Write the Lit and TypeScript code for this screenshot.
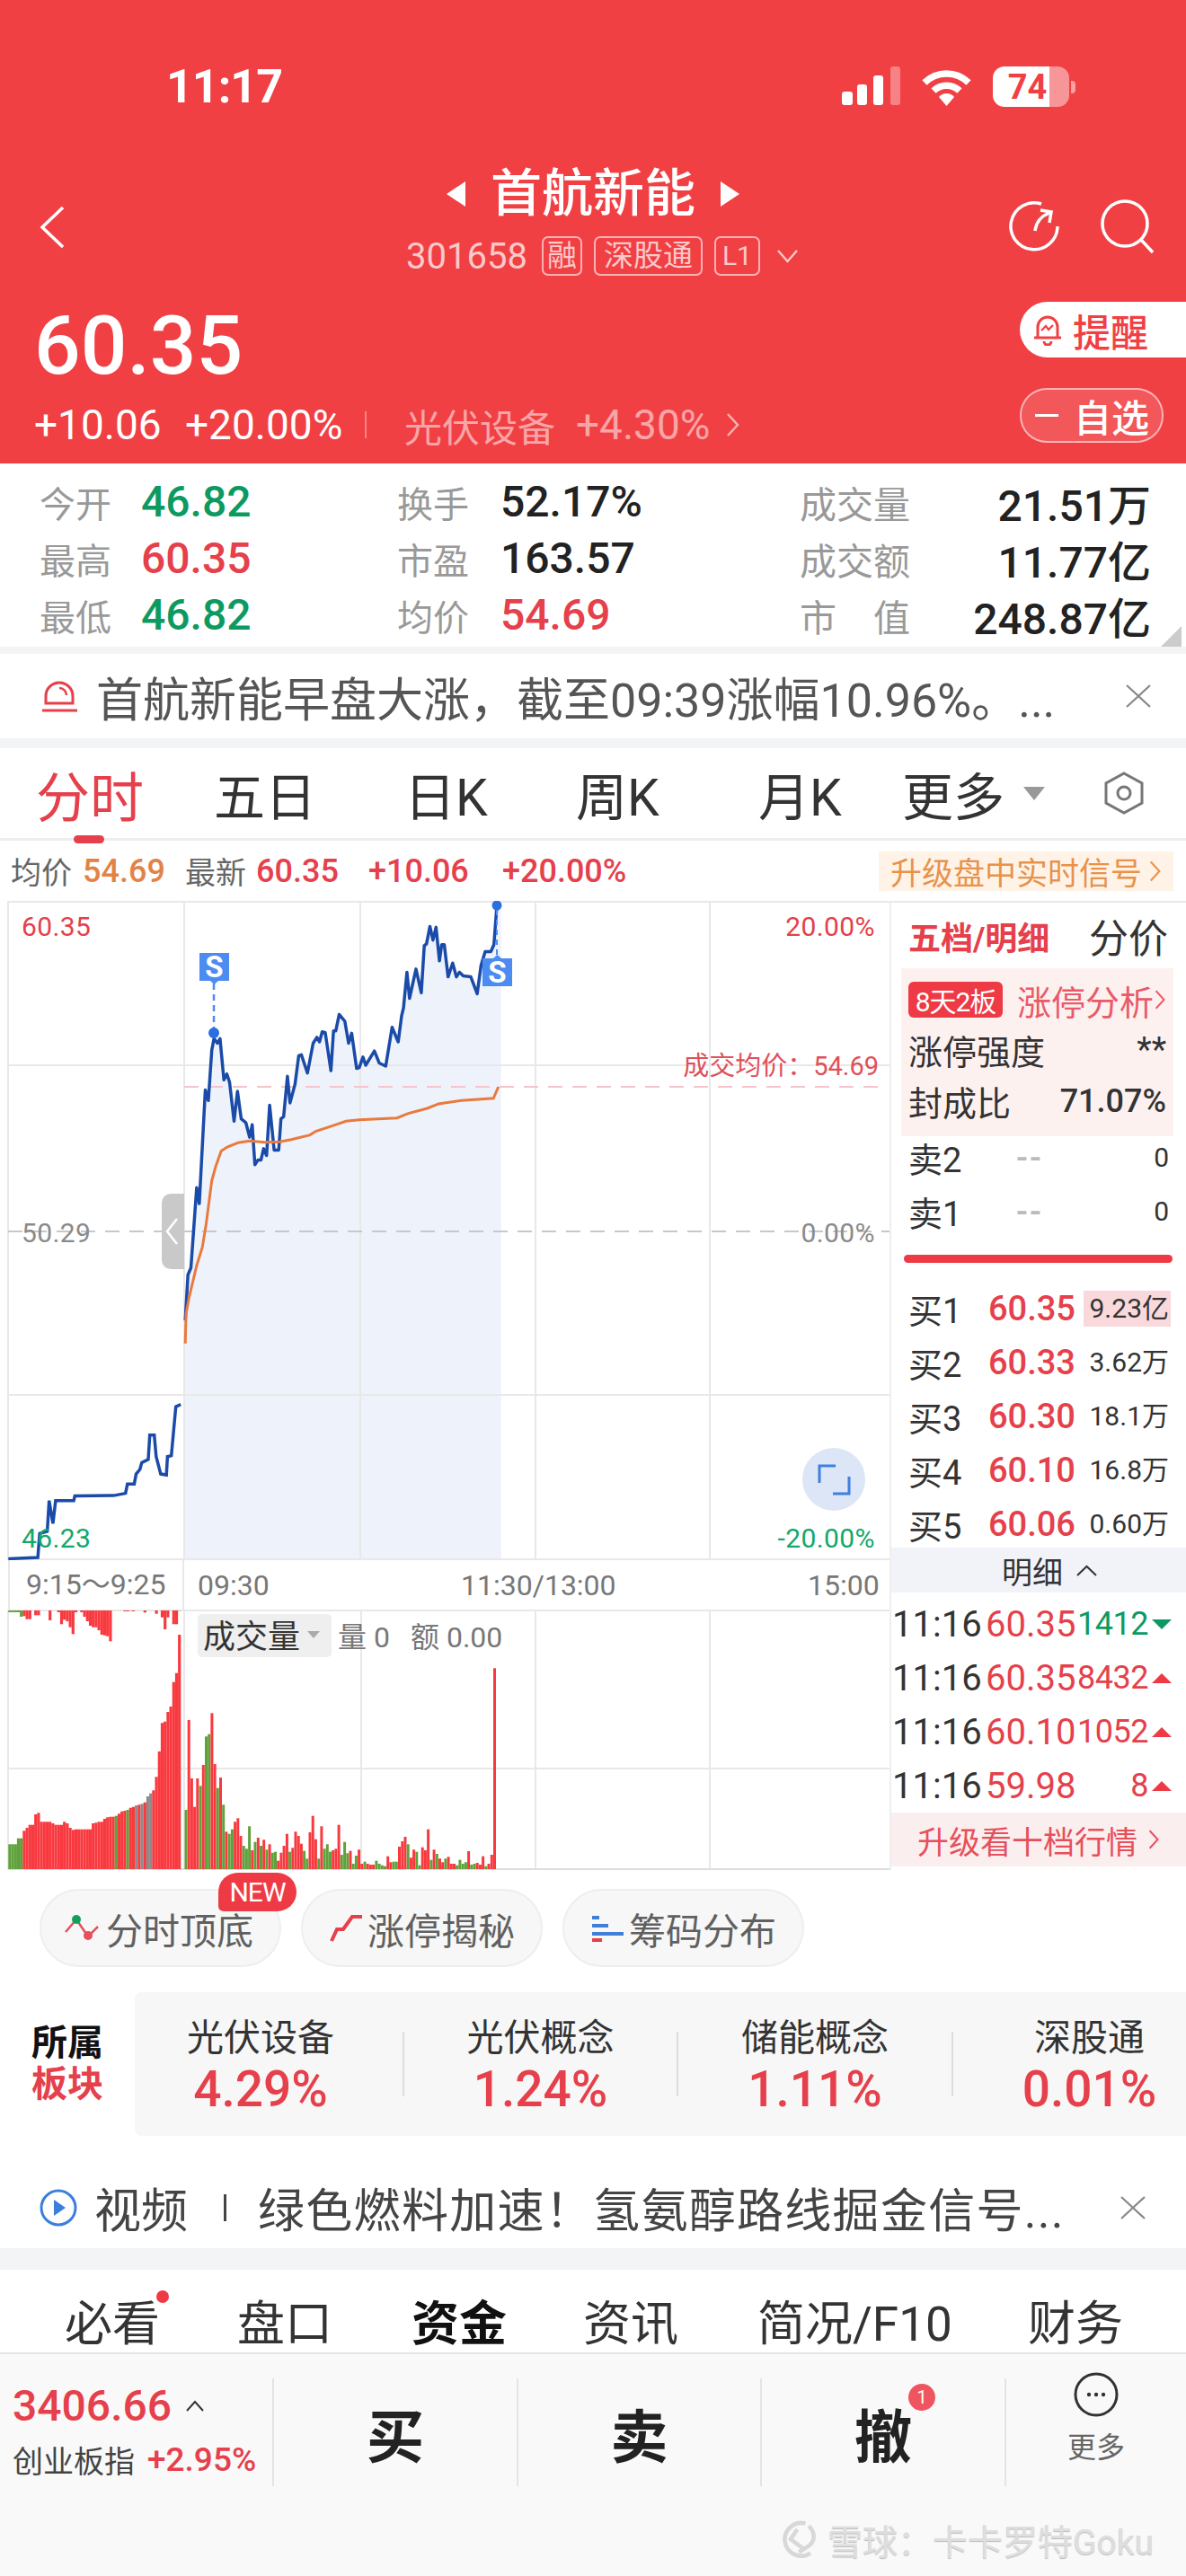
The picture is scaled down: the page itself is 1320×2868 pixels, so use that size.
import { LitElement, html, svg, css } from "lit"
import { customElement } from "lit/decorators.js"

// all chart data is read off the screenshot, in zoomed crop coordinates
const mainLine = [[490,1000],[497,900],[505,885],[520,710],[527,745],[543,497],[551,520],[560,410],[566,385],[575,395],[582,385],[592,475],[600,462],[607,480],[619,565],[628,500],[638,560],[650,568],[660,600],[667,573],[674,660],[682,650],[690,650],[697,625],[705,640],[713,530],[725,628],[737,628],[743,560],[750,555],[760,467],[767,525],[780,485],[790,422],[797,420],[813,460],[828,395],[838,382],[845,392],[852,370],[860,372],[875,455],[882,368],[888,368],[897,332],[912,347],[922,395],[930,373],[943,450],[950,448],[960,425],[967,443],[990,412],[1003,438],[1020,445],[1037,360],[1053,392],[1062,335],[1067,318],[1076,240],[1083,297],[1100,233],[1114,285],[1122,182],[1128,178],[1137,140],[1145,170],[1153,142],[1162,215],[1168,180],[1175,180],[1185,250],[1197,220],[1207,250],[1215,240],[1225,248],[1245,250],[1262,287],[1272,225],[1283,195],[1298,195],[1306,180],[1314,95]]
const avgLine = [[490,1050],[492,985],[500,950],[520,880],[535,840],[545,790],[560,695],[570,665],[585,630],[600,622],[630,612],[660,608],[700,611],[740,610],[770,605],[820,595],[835,587],[890,572],[915,565],[950,562],[1050,558],[1080,548],[1130,537],[1160,527],[1220,520],[1305,515],[1318,490]]
const preLine = [[22,1520],[100,1517],[105,1465],[125,1460],[130,1393],[140,1443],[147,1393],[195,1393],[198,1383],[300,1382],[332,1377],[337,1357],[355,1357],[360,1335],[370,1325],[375,1310],[392,1303],[396,1250],[408,1250],[413,1297],[425,1335],[440,1337],[443,1297],[453,1295],[465,1188],[478,1183]]

const preBars = "g820 g820 g820 g800 g800 r775 r765 r755 r755 r720 r715 r745 r745 r745 r745 r750 r755 r755 r755 r745 r750 r765 r772 r770 r770 r770 r770 r770 r770 r750 r748 r745 r745 r735 r730 r728 r728 g725 r718 r710 r708 g705 r698 r695 k690 r688 k685 r680 k660 k650 r640 r595 r510 r415 r410 r378 r360 r278 r248 r120".split(" ")
const auctionBars: [number, string, number][] = [[0,"g",45],[1,"g",45],[2,"g",45],[3,"g",45],[4,"g",60],[5,"r",58],[6,"r",68],[7,"r",68],[9,"r",55],[10,"r",55],[14,"r",72],[17,"r",45],[18,"r",85],[19,"r",70],[20,"r",75],[21,"r",95],[22,"r",118],[23,"r",45],[25,"r",45],[26,"r",60],[27,"r",75],[28,"r",90],[29,"r",95],[30,"r",95],[31,"r",105],[32,"r",120],[33,"r",122],[34,"r",125],[35,"r",142],[40,"r",42],[41,"r",42],[42,"r",40],[43,"r",42],[47,"r",46],[51,"r",50],[53,"r",62],[54,"r",102],[55,"r",62],[57,"r",85],[58,"r",85],[59,"r",40]]
const dayBars = "g705 r405 r600 r695 r600 g625 r555 g460 g452 r382 r552 g632 r597 g688 r778 g785 g770 r745 r733 r792 g825 g835 g760 r840 g812 r798 g825 r805 g838 r820 g848 g845 r875 r848 r825 r785 g845 r832 r778 r792 r818 g842 g868 r780 r725 r803 g868 r760 g835 g820 g845 r840 r835 r755 g855 g812 g850 r842 g885 g858 r838 r885 g878 r885 r888 r888 g875 g885 g890 g893 r860 r880 g878 g878 r828 r810 r795 g820 r865 r838 g845 g890 r830 r840 r770 g872 r838 g852 r868 r880 g868 r862 r885 r885 g890 g872 g885 g880 r843 g888 g885 r882 r888 r860 g893 r885 r855 r232".split(" ")

const barColor: Record<string, string> = { r: "#f8393f", g: "#5fa13b", k: "#8f8a8a" }

const toPoints = (pts: number[][]) =>
	pts.map(([x, y]) => `${(x / 2.376).toFixed(1)},${(y / 1.96 - 43).toFixed(1)}`).join(" ")

const chevronRight = (cls = "chev") => html`<svg class=${cls} viewBox="0 0 16 28"><path d="M2 2l11 12L2 26" fill="none" stroke="currentColor" stroke-width="2.4"/></svg>`

const buys = [
	["买1", "60.35", "9.23亿"],
	["买2", "60.33", "3.62万"],
	["买3", "60.30", "18.1万"],
	["买4", "60.10", "16.8万"],
	["买5", "60.06", "0.60万"],
]
const trades = [
	["60.35", "1412", "down"],
	["60.35", "8432", "up"],
	["60.10", "1052", "up"],
	["59.98", "8", "up"],
]
const sectors = [
	["光伏设备", "4.29%"],
	["光伏概念", "1.24%"],
	["储能概念", "1.11%"],
	["深股通", "0.01%"],
]

@customElement("app-root")
export class AppRoot extends LitElement {
	static styles = css`
:host {
	display: block;
	width: 1320px;
	height: 2868px;
	overflow: hidden;
	background: #fff;
	font-family: Roboto, "Noto Sans CJK SC", sans-serif;
	color: #333;
}
svg { display: block; }
.chev { width: 16px; height: 28px; }

/* red header */
.header { height: 516px; background: #f14044; color: #fff; }
.status { height: 130px; display: flex; align-items: flex-start; padding: 74px 123px 0 185px; box-sizing: border-box; }
.time { font-size: 52px; font-weight: 700; line-height: 46px; letter-spacing: -1px; }
.status-icons { margin-left: auto; display: flex; align-items: flex-start; }
.wifi { margin: 1px 23px 0 23px; }
.battery {
	width: 85px; height: 45px; border-radius: 13px; display: flex; align-items: center; justify-content: center;
	background: linear-gradient(90deg, #fff 74%, rgba(255,255,255,.45) 74%);
	color: #f14044; font-size: 38px; font-weight: 700; padding-right: 8px; box-sizing: border-box;
}
.nib { width: 5px; height: 14px; margin: 16px 0 0 2px; background: rgba(255,255,255,.5); border-radius: 0 4px 4px 0; }

.nav { height: 206px; display: grid; grid-template-columns: 1fr auto 1fr; padding-top: 56px; box-sizing: border-box; }
.back { margin: 42px 0 0 42px; }
.mid { display: flex; flex-direction: column; align-items: center; }
.title-row { display: flex; align-items: center; gap: 28px; height: 60px; }
.title { font-size: 57px; font-weight: 500; line-height: 60px; }
.code-row { display: flex; align-items: center; margin-top: 17px; height: 44px; color: rgba(255,255,255,.72); padding-left: 20px; }
.code { font-size: 40px; margin-right: 16px; }
.tag { height: 44px; box-sizing: border-box; border: 2px solid rgba(255,255,255,.6); border-radius: 7px; font-size: 33px; line-height: 40px; padding: 0 4px; margin-right: 13px; }
.tag.wide { padding: 0 9px; }
.tag.l1 { font-size: 30px; padding: 0 7px; }
.code-row .down { margin-left: 6px; }
.actions { display: flex; justify-content: flex-end; align-items: flex-start; gap: 43px; padding: 36px 34px 0 0; }

.price-row { display: flex; justify-content: space-between; }
.price { font-size: 91px; font-weight: 500; line-height: 94px; padding: 2px 0 0 38px; margin-bottom: -2px; }
.change { display: grid; grid-template-columns: 168px 200px 44px 191px 167px auto; align-items: center; height: 86px; padding-left: 38px; font-size: 46px; }
.change .dim { color: rgba(255,255,255,.55); }
.change .sector { font-size: 42px; }
.change .bar { width: 2px; height: 30px; background: rgba(255,255,255,.35); }
.change .chev { color: rgba(255,255,255,.6); }
.remind {
	width: 185px; height: 62px; box-sizing: border-box; background: #fff; color: #f14044; border-radius: 31px 0 0 31px;
	display: flex; align-items: center; padding-left: 14px; gap: 11px; font-size: 42px; font-weight: 500;
}
.watch {
	width: 160px; height: 61px; box-sizing: border-box; margin: 34px 25px 0 0; border-radius: 30px; border: 2px solid rgba(255,255,255,.55);
	background: rgba(255,255,255,.12); display: flex; align-items: center; padding-left: 15px; gap: 17px; font-size: 42px; font-weight: 500;
}
.watch i { width: 26px; height: 3px; background: #fff; }

/* quote grid */
.stats {
	position: relative; height: 212px; box-sizing: border-box; padding: 11px 39px 0 44px;
	display: grid; grid-template-columns: 398px 448px 1fr; grid-auto-rows: 63px; border-bottom: 8px solid #f4f4f5;
}
.cell { display: flex; align-items: center; font-size: 48px; font-weight: 500; color: #222; }
.lab { font-size: 40px; font-weight: 400; color: #999; width: 113px; flex: none; }
.col2 .lab { width: 115px; }
.col3 .lab { width: 123px; font-size: 41px; display: flex; justify-content: space-between; }
.col3 b { margin-left: auto; font-weight: 500; }
.red { color: #e5404b; }
.green { color: #0d9a62; }
.cell.red { color: #e5404b; }
.cell.green { color: #0d9a62; }
.corner { position: absolute; right: 5px; bottom: 0; width: 0; height: 0; border-left: 23px solid transparent; border-bottom: 23px solid #ccc; }

.notice { display: flex; align-items: center; height: 94px; padding-left: 46px; font-size: 52px; color: #555; white-space: nowrap; }
.notice .icon { margin-right: 20px; flex: none; }
.notice .close { margin-left: auto; margin-right: 39px; flex: none; }
.band { background: #f3f4f6; }
.band.thin { height: 11px; }
.band.wide { height: 24px; }

/* period tabs */
.tabs {
	height: 103px; box-sizing: border-box; border-bottom: 3px solid #eee; padding-left: 40px; font-size: 57px; color: #333;
	display: grid; grid-template-columns: 198px 212px 191px 203px 160px 135px 90px auto; align-items: center;
}
.tabs .on { position: relative; color: #e5404b; font-size: 60px; }
.tabs .on::after { content: ""; position: absolute; left: 42px; bottom: -12px; width: 34px; height: 9px; border-radius: 5px; background: #e5404b; }
.tri { width: 0; height: 0; border-left: 12px solid transparent; border-right: 12px solid transparent; border-top: 15px solid #999; }

.info {
	height: 67px; padding-left: 12px; font-size: 34px; color: #666; align-items: center;
	display: grid; grid-template-columns: 80px 114px 79px 125px 149px 419px 328px;
}
.info b { font-size: 36px; font-weight: 500; white-space: nowrap; }
.orange { color: #e28345; }
.signal { height: 44px; background: #fff3e8; color: #e8924a; font-size: 35px; display: flex; align-items: center; justify-content: center; gap: 8px; }
.signal .chev { width: 14px; height: 26px; }

/* chart + depth */
.board { display: flex; height: 1079px; }
.left { width: 990px; flex: none; }
.axis { height: 55px; box-sizing: border-box; margin-left: 9px; border-left: 2px solid #e8e8e8; display: grid; grid-template-columns: 194px 308px 386px auto; align-items: center; font-size: 32px; color: #777; white-space: nowrap; }
.axis span:first-child { padding-left: 18px; border-right: 2px solid #e8e8e8; height: 55px; line-height: 55px; }
.axis span:nth-child(2) { padding-left: 15px; }
svg text { font-family: Roboto, "Noto Sans CJK SC", sans-serif; }
.t { font-size: 30px; letter-spacing: .4px; }
.tc { font-size: 29px; }
.tv { font-size: 32px; fill: #777; }
.ts { font-size: 33px; font-weight: 700; fill: #fff; }

.right { flex: 1; border-top: 2px solid #e8e8e8; border-left: 2px solid #eee; box-sizing: border-box; }
.right-head { height: 73px; display: flex; align-items: center; justify-content: space-between; padding: 0 20px 0 19px; }
.right-head b { font-size: 36px; color: #e5404b; }
.right-head span { font-size: 44px; color: #333; }
.limit { height: 187px; box-sizing: border-box; margin: 0 14px 0 11px; background: #fdf1f0; padding: 15px 8px 0 8px; font-size: 38px; }
.limit-top { display: flex; align-items: center; height: 40px; color: #ea5a68; white-space: nowrap; }
.board-badge { width: 105px; height: 40px; flex: none; border-radius: 6px; background: #ee3a45; color: #fff; font-size: 30px; display: flex; align-items: center; justify-content: center; margin-right: 16px; white-space: nowrap; letter-spacing: -1px; }
.limit-top .chev { margin-left: auto; width: 13px; height: 24px; flex: none; }
.limit-row { display: flex; justify-content: space-between; align-items: center; height: 57px; color: #333; white-space: nowrap; }
.limit-row b { font-weight: 500; font-size: 36px; }
.limit-top + .limit-row { margin-top: 7px; }
.quotes { padding: 0 17px 0 19px; display: grid; grid-auto-rows: 52px; row-gap: 8px; }
.quotes.sell { margin-top: -4px; }
.q { display: grid; grid-template-columns: 89px 106px 1fr; align-items: center; font-size: 38px; white-space: nowrap; }
.q .p { font-weight: 500; color: #e5404b; }
.q .v { font-size: 30px; text-align: right; color: #333; padding-right: 2px; line-height: 40px; }
.q .v.hl { background: #f9d9db; }
.q .dash { color: #bbb; padding-left: 31px; letter-spacing: 2px; font-weight: 500; }
.depth-bar { height: 9px; border-radius: 5px; background: #ee3a45; margin: 24px 15px 23px 14px; }
.detail-head { height: 50px; margin-top: 2px; padding-left: 24px; background: #f2f3f8; display: flex; align-items: center; justify-content: center; gap: 15px; font-size: 34px; color: #333; }
.trades { padding: 5px 0 0 1px; }
.tr { height: 60px; display: grid; grid-template-columns: 104px 100px 81px auto; align-items: center; font-size: 40px; color: #333; white-space: nowrap; }
.tr .p { color: #e5404b; }
.tr .v { font-size: 36px; text-align: right; color: #e5404b; letter-spacing: -.5px; }
.tr .v.green { color: #0d9a62; }
.up, .dn { width: 0; height: 0; margin-left: 4px; border-left: 11px solid transparent; border-right: 11px solid transparent; }
.up { border-bottom: 11px solid #ee3a45; }
.dn { border-top: 11px solid #0d9a62; }
.more10 { height: 60px; background: #fbeeee; color: #e5505c; font-size: 35px; display: flex; align-items: center; justify-content: center; gap: 12px; }
.more10 .chev { width: 13px; height: 24px; }

/* feature pills */
.pills { display: flex; gap: 22px; padding: 21px 0 0 44px; height: 87px; }
.pill { position: relative; width: 269px; height: 87px; box-sizing: border-box; border: 2px solid #eee; border-radius: 44px; background: #f7f7f7; display: flex; align-items: center; gap: 6px; padding-left: 26px; font-size: 41px; color: #606060; white-space: nowrap; }
.new { position: absolute; right: -19px; top: -20px; width: 87px; height: 43px; background: #ee3a45; color: #fff; font-size: 30px; border-radius: 22px 22px 22px 6px; display: flex; align-items: center; justify-content: center; letter-spacing: -1px; }

/* sector strip */
.sector-row { display: flex; margin-top: 28px; height: 160px; }
.sector-tag { width: 150px; flex: none; padding: 34px 0 0 35px; box-sizing: border-box; font-size: 40px; font-weight: 700; line-height: 46px; color: #111; }
.sector-box { flex: 1; background: #f7f7f7; border-radius: 8px 0 0 8px; display: grid; grid-template-columns: 298px 305px 306px 1fr; align-items: center; }
.sec { height: 72px; border-left: 2px solid #ddd; display: flex; flex-direction: column; align-items: center; justify-content: center; }
.sec:first-child { border-left: none; padding-right: 18px; }
.sec:last-child { padding-left: 44px; }
.sec span { font-size: 41px; color: #333; line-height: 48px; margin-top: -8px; white-space: nowrap; }
.sec b { font-size: 55px; font-weight: 500; color: #e5404b; line-height: 66px; white-space: nowrap; margin-bottom: -16px; }

.notice.video { height: 125px; padding-top: 34px; box-sizing: border-box; padding-left: 44px; color: #444; }
.notice.video .icon { margin-right: 19px; }
.notice.video .bar { margin: 0 35px 0 40px; width: 3px; height: 30px; background: #444; }
.notice.video .long { letter-spacing: 1.3px; }
.notice.video .close { margin-right: 45px; }

/* info tabs */
.subtabs {
	height: 94px; box-sizing: border-box; border-bottom: 2px solid #e5e5e5; padding: 36px 0 0 72px; font-size: 53px; color: #333; line-height: 50px;
	display: grid; grid-template-columns: 192px 194px 191px 194px 301px auto; white-space: nowrap;
}
.subtabs b { color: #111; font-weight: 700; }
.subtabs .dot { position: relative; }
.subtabs .dot::after { content: ""; position: absolute; left: 102px; top: -13px; width: 14px; height: 14px; border-radius: 50%; background: #ee3a45; }

/* trade bar */
.dock { height: 247px; background: #f9f9f9; padding-top: 27px; box-sizing: border-box; display: flex; flex-direction: column; }
.dock-row { display: grid; grid-template-columns: 303px 272px 271px 272px 1fr; height: 90px; }
.index { padding-left: 14px; white-space: nowrap; }
.index .v { display: flex; align-items: center; gap: 16px; font-size: 48px; font-weight: 500; color: #e5404b; height: 60px; }
.index .s { display: flex; align-items: center; gap: 14px; font-size: 34px; color: #444; height: 60px; }
.index .s b { font-size: 37px; font-weight: 500; color: #e5404b; }
.act { position: relative; border-left: 2px solid #e4e4e4; display: flex; align-items: center; justify-content: center; font-size: 64px; font-weight: 700; color: #222; }
.act b { position: relative; font-weight: 700; }
.badge { position: absolute; right: -26px; top: -8px; width: 30px; height: 30px; border-radius: 50%; background: #ef5560; color: #fff; font-size: 20px; font-weight: 400; display: flex; align-items: center; justify-content: center; }
.more { border-left: 2px solid #e4e4e4; display: flex; flex-direction: column; align-items: center; font-size: 32px; color: #666; }
.more svg { margin: -7px 0 8px; }
.mark { align-self: flex-end; margin: 61px 36px 0 0; display: flex; align-items: center; gap: 8px; font-size: 39px; color: #dedede; white-space: nowrap; text-shadow: 0 1px 1px #bbb; }
`

	priceChart() {
		const fill = [...mainLine, [1325, 95], [1325, 1522], [488, 1522]]
		return html`<svg width="990" height="734" viewBox="0 0 990 734">
			<polygon points=${toPoints(fill)} fill="#eef2fb"/>
			${[9, 205, 401, 596, 790].map((x) => svg`<line x1=${x} x2=${x} y1="0" y2="734" stroke="#e8e8e8" stroke-width="2"/>`)}
			${[1, 183, 550, 733].map((y) => svg`<line x1="9" x2="990" y1=${y} y2=${y} stroke="#e8e8e8" stroke-width="2"/>`)}
			<line x1="9" x2="990" y1="368" y2="368" stroke="#c8c8c8" stroke-width="2" stroke-dasharray="16 11"/>
			<line x1="205" x2="985" y1="207" y2="207" stroke="#f6c4cb" stroke-width="2" stroke-dasharray="16 11"/>
			<polyline points=${toPoints(preLine)} fill="none" stroke="#1b4ba8" stroke-width="3.5"/>
			<polyline points=${toPoints(mainLine)} fill="none" stroke="#1b4ba8" stroke-width="3.5" stroke-linejoin="round"/>
			<polyline points=${toPoints(avgLine)} fill="none" stroke="#e97a3e" stroke-width="3"/>

			<path d="M205 326h-15a10 10 0 0 0-10 10v64a10 10 0 0 0 10 10h15z" fill="#c9c9c9"/>
			<path d="M197 354l-11 14 11 14" fill="none" stroke="#fff" stroke-width="2.5"/>

			<line x1="238" x2="238" y1="92" y2="147" stroke="#4b8bf2" stroke-width="2.5" stroke-dasharray="7 5"/>
			<circle cx="238" cy="147" r="6" fill="#2a6fe0"/>
			<path d="M222 58h33v31h-12l-4.500 4-4.500-4h-12z" fill="#4b8bf2"/>
			<text class="ts" x="238.500" y="85" text-anchor="middle">S</text>
			<line x1="553" x2="553" y1="10" y2="60" stroke="#4b8bf2" stroke-width="2" stroke-dasharray="6 5"/>
			<circle cx="553" cy="5" r="5.500" fill="#2a6fe0"/>
			<path d="M537 64h12l4.500-4 4.500 4h12v31h-33z" fill="#4b8bf2"/>
			<text class="ts" x="553.500" y="91" text-anchor="middle">S</text>

			<text class="t" x="24" y="39" fill="#e5404b">60.35</text>
			<text class="t" x="24" y="380" fill="#8a8a8a">50.29</text>
			<text class="t" x="24" y="720" fill="#12a86a">46.23</text>
			<text class="t" x="974" y="39" fill="#e5404b" text-anchor="end">20.00%</text>
			<text class="t" x="974" y="380" fill="#8a8a8a" text-anchor="end">0.00%</text>
			<text class="t" x="974" y="720" fill="#12a86a" text-anchor="end">-20.00%</text>
			<text class="tc" x="978" y="194" fill="#e0505a" text-anchor="end">成交均价：54.69</text>

			<circle cx="928" cy="644" r="35" fill="#dce6f6"/>
			<path d="M912 648V629h18M945 641v19h-18" fill="none" stroke="#3e7fe0" stroke-width="3"/>
		</svg>`
	}

	volumeChart() {
		const bottom = 289
		const rect = (x: number, y: number, c: string, w: number) => {
			const top = y / 3 - 12
			return svg`<rect x=${x.toFixed(1)} y=${top.toFixed(1)} width=${w} height=${(bottom - top).toFixed(1)} fill=${barColor[c]}/>`
		}
		return html`<svg width="990" height="290" viewBox="0 0 990 290">
			${[9, 205, 402, 596, 790].map((x) => svg`<line x1=${x} x2=${x} y1="0" y2="290" stroke="#e8e8e8" stroke-width="2"/>`)}
			<line x1="9" x2="990" y1="1" y2="1" stroke="#e8e8e8" stroke-width="2"/>
			<line x1="9" x2="990" y1="177" y2="177" stroke="#e8e8e8" stroke-width="2"/>
			<line x1="9" x2="990" y1="289" y2="289" stroke="#ddd" stroke-width="2"/>
			${auctionBars.map(([i, c, end]) => svg`<rect x=${(9.3 + i * 3.2).toFixed(1)} y="1" width="3.2" height=${(end / 3 - 13).toFixed(1)} fill=${barColor[c]}/>`)}
			${preBars.map((b, i) => rect(9.3 + i * 3.2, +b.slice(1), b[0], 3.2))}
			${dayBars.map((b, i) => rect(205.500 + i * 3.21, +b.slice(1), b[0], 3))}
			<rect x="220" y="5" width="149" height="48" rx="5" fill="#efefef"/>
			<text x="226" y="43" font-size="36" fill="#333">成交量</text>
			<path d="M342 24h14l-7 8z" fill="#aaa"/>
			<text class="tv" x="376" y="42">量 0</text>
			<text class="tv" x="457" y="42">额 0.00</text>
		</svg>`
	}

	render() {
		return html`
		<div class="header">
			<div class="status">
				<div class="time">11:17</div>
				<div class="status-icons">
					<svg width="65" height="43" viewBox="0 0 65 43" fill="#fff">
						<rect x="0" y="28" width="12" height="15" rx="3"/>
						<rect x="17" y="20" width="11" height="23" rx="3"/>
						<rect x="35" y="10" width="11" height="33" rx="3"/>
						<rect x="54" y="0" width="11" height="43" rx="3" opacity=".35"/>
					</svg>
					<svg class="wifi" width="57" height="43" viewBox="0 0 57 43">
						<path d="M4 17a35 35 0 0 1 49 0M14 26a21 21 0 0 1 29 0" fill="none" stroke="#fff" stroke-width="7.500"/>
						<path d="M20 33a11 11 0 0 1 17 0l-8.500 10z" fill="#fff"/>
					</svg>
					<div class="battery">74</div>
					<div class="nib"></div>
				</div>
			</div>

			<div class="nav">
				<svg class="back" width="32" height="50" viewBox="0 0 32 50"><path d="M28 3L5 25l23 22" fill="none" stroke="#fff" stroke-width="3.500"/></svg>
				<div class="mid">
					<div class="title-row">
						<svg width="21" height="28" viewBox="0 0 21 28"><path d="M21 0v28L0 14z" fill="#fff"/></svg>
						<div class="title">首航新能</div>
						<svg width="21" height="28" viewBox="0 0 21 28"><path d="M0 0v28l21-14z" fill="#fff"/></svg>
					</div>
					<div class="code-row">
						<span class="code">301658</span>
						<span class="tag">融</span>
						<span class="tag wide">深股通</span>
						<span class="tag l1">L1</span>
						<svg class="down" width="23" height="15" viewBox="0 0 23 15"><path d="M1 1l10.500 12L22 1" fill="none" stroke="currentColor" stroke-width="2.400"/></svg>
					</div>
				</div>
				<div class="actions">
					<svg width="60" height="60" viewBox="0 0 60 60" fill="none" stroke="#fff" stroke-width="3.500">
						<path d="M38 5A26 26 0 1 0 56 30"/>
						<path d="M31 35c1-9 6-16 16-20M37 12l12 2-2 12"/>
					</svg>
					<svg width="62" height="62" viewBox="0 0 62 62" fill="none" stroke="#fff" stroke-width="3.500">
						<circle cx="28" cy="27" r="25"/><path d="M46 45l13 14"/>
					</svg>
				</div>
			</div>

			<div class="price-row">
				<div>
					<div class="price">60.35</div>
					<div class="change">
						<span>+10.06</span>
						<span>+20.00%</span>
						<i class="bar"></i>
						<span class="dim sector">光伏设备</span>
						<span class="dim">+4.30%</span>
						${chevronRight()}
					</div>
				</div>
				<div>
					<div class="remind">
						<svg width="34" height="36" viewBox="0 0 34 36" fill="none" stroke="#f14044" stroke-width="3">
							<path d="M6 27V15a11 11 0 0 1 22 0v12zM2 27h30M13 31a4 4 0 0 0 8 0"/>
							<path d="M10 19l5-5 3 4 5-5" stroke-width="2.200"/>
						</svg>
						<span>提醒</span>
					</div>
					<div class="watch"><i></i><span>自选</span></div>
				</div>
			</div>
		</div>

		<div class="stats">
			<div class="cell green"><span class="lab">今开</span>46.82</div>
			<div class="cell col2"><span class="lab">换手</span>52.17%</div>
			<div class="cell col3"><span class="lab">成交量</span><b>21.51万</b></div>
			<div class="cell red"><span class="lab">最高</span>60.35</div>
			<div class="cell col2"><span class="lab">市盈</span>163.57</div>
			<div class="cell col3"><span class="lab">成交额</span><b>11.77亿</b></div>
			<div class="cell green"><span class="lab">最低</span>46.82</div>
			<div class="cell col2 red"><span class="lab">均价</span>54.69</div>
			<div class="cell col3"><span class="lab"><span>市</span><span>值</span></span><b>248.87亿</b></div>
			<div class="corner"></div>
		</div>

		<div class="notice">
			<svg class="icon" width="41" height="38" viewBox="0 0 41 38" fill="none" stroke="#e5404b" stroke-width="3">
				<path d="M5 27V19a15 15 0 0 1 30 0v8zM1 35h39"/><path d="M20 10a8 8 0 0 1 8 8" stroke-width="2.500"/>
			</svg>
			<span>首航新能早盘大涨，截至09:39涨幅10.96%。...</span>
			<svg class="close" width="28" height="26" viewBox="0 0 28 26"><path d="M1 1l26 24M27 1L1 25" stroke="#888" stroke-width="2.200"/></svg>
		</div>
		<div class="band thin"></div>

		<div class="tabs">
			<span class="on">分时</span><span>五日</span><span>日K</span><span>周K</span><span>月K</span><span>更多</span>
			<i class="tri"></i>
			<svg width="44" height="48" viewBox="0 0 44 48" fill="none" stroke="#777" stroke-width="3">
				<path d="M22 2l20 11v22L22 46 2 35V13z"/><circle cx="22" cy="24" r="7"/>
			</svg>
		</div>

		<div class="info">
			<span>均价</span><b class="orange">54.69</b>
			<span>最新</span><b class="red">60.35</b>
			<b class="red">+10.06</b><b class="red">+20.00%</b>
			<div class="signal">升级盘中实时信号${chevronRight()}</div>
		</div>

		<div class="board">
			<div class="left">
				${this.priceChart()}
				<div class="axis"><span>9:15～9:25</span><span>09:30</span><span>11:30/13:00</span><span>15:00</span></div>
				${this.volumeChart()}
			</div>
			<div class="right">
				<div class="right-head"><b>五档/明细</b><span>分价</span></div>
				<div class="limit">
					<div class="limit-top"><span class="board-badge">8天2板</span>涨停分析${chevronRight()}</div>
					<div class="limit-row"><span>涨停强度</span><span>**</span></div>
					<div class="limit-row"><span>封成比</span><b>71.07%</b></div>
				</div>
				<div class="quotes sell">
					<div class="q"><span>卖2</span><span class="dash">--</span><span class="v">0</span></div>
					<div class="q"><span>卖1</span><span class="dash">--</span><span class="v">0</span></div>
				</div>
				<div class="depth-bar"></div>
				<div class="quotes">
					${buys.map(([l, p, v], i) => html`<div class="q"><span>${l}</span><span class="p">${p}</span><span class="v ${i == 0 ? "hl" : ""}">${v}</span></div>`)}
				</div>
				<div class="detail-head">明细
					<svg width="23" height="13" viewBox="0 0 23 13"><path d="M1 12L11.500 2 22 12" fill="none" stroke="#333" stroke-width="2"/></svg>
				</div>
				<div class="trades">
					${trades.map(([p, v, d]) => html`<div class="tr"><span>11:16</span><span class="p">${p}</span><span class="v ${d == "down" ? "green" : ""}">${v}</span><i class=${d == "down" ? "dn" : "up"}></i></div>`)}
				</div>
				<div class="more10">升级看十档行情${chevronRight()}</div>
			</div>
		</div>

		<div class="pills">
			<div class="pill">
				<svg width="40" height="32" viewBox="0 0 40 32" fill="none">
					<path d="M1 20L13 6l13 19 11-11" stroke="#e5505c" stroke-width="2.500"/>
					<circle cx="13" cy="6" r="5" fill="#12a05f"/><circle cx="26" cy="24" r="5" fill="#e5505c"/>
				</svg>
				分时顶底<span class="new">NEW</span>
			</div>
			<div class="pill">
				<svg width="40" height="32" viewBox="0 0 40 32" fill="none"><path d="M6 30l6-13h7L29 3h11" stroke="#e5404b" stroke-width="4"/></svg>
				涨停揭秘
			</div>
			<div class="pill">
				<svg width="40" height="32" viewBox="0 0 40 32">
					<rect x="5" y="2" width="8" height="4" fill="#3f7fd8"/><rect x="5" y="11" width="18" height="4" fill="#3f7fd8"/>
					<rect x="5" y="20" width="35" height="4" fill="#3f7fd8"/><rect x="5" y="27" width="11" height="4" fill="#e5404b"/>
				</svg>
				筹码分布
			</div>
		</div>

		<div class="sector-row">
			<div class="sector-tag">所属<br><span class="red">板块</span></div>
			<div class="sector-box">
				${sectors.map(([n, v]) => html`<div class="sec"><span>${n}</span><b>${v}</b></div>`)}
			</div>
		</div>

		<div class="notice video">
			<svg class="icon" width="42" height="42" viewBox="0 0 42 42">
				<circle cx="21" cy="21" r="19" fill="none" stroke="#3b7fdc" stroke-width="3"/><path d="M16 12l13 9-13 9z" fill="#3b7fdc"/>
			</svg>
			<span>视频</span><i class="bar"></i><span class="long">绿色燃料加速！氢氨醇路线掘金信号...</span>
			<svg class="close" width="28" height="26" viewBox="0 0 28 26"><path d="M1 1l26 24M27 1L1 25" stroke="#888" stroke-width="2.200"/></svg>
		</div>
		<div class="band wide"></div>

		<div class="subtabs">
			<span class="dot">必看</span><span>盘口</span><b>资金</b><span>资讯</span><span>简况/F10</span><span>财务</span>
		</div>

		<div class="dock">
			<div class="dock-row">
				<div class="index">
					<div class="v">3406.66
						<svg width="20" height="13" viewBox="0 0 20 13"><path d="M1 12l9-10 9 10" fill="none" stroke="#333" stroke-width="2"/></svg>
					</div>
					<div class="s">创业板指<b>+2.95%</b></div>
				</div>
				<div class="act"><b>买</b></div>
				<div class="act"><b>卖</b></div>
				<div class="act"><b>撤<span class="badge">1</span></b></div>
				<div class="more">
					<svg width="50" height="50" viewBox="0 0 50 50">
						<circle cx="25" cy="25" r="23" fill="none" stroke="#333" stroke-width="3"/>
						<circle cx="17" cy="25" r="2.200" fill="#333"/><circle cx="25" cy="25" r="2.200" fill="#333"/><circle cx="33" cy="25" r="2.200" fill="#333"/>
					</svg>
					<span>更多</span>
				</div>
			</div>
			<div class="mark">
				<svg width="44" height="44" viewBox="0 0 48 44" fill="none" stroke="#d8d8d8" stroke-width="5">
					<path d="M30 3a20 20 0 1 0 6 36M34 6c8 8 8 18 0 24l-12 8M20 10l-8 12 16 12"/>
				</svg>
				<span>雪球：卡卡罗特Goku</span>
			</div>
		</div>
		`
	}
}
